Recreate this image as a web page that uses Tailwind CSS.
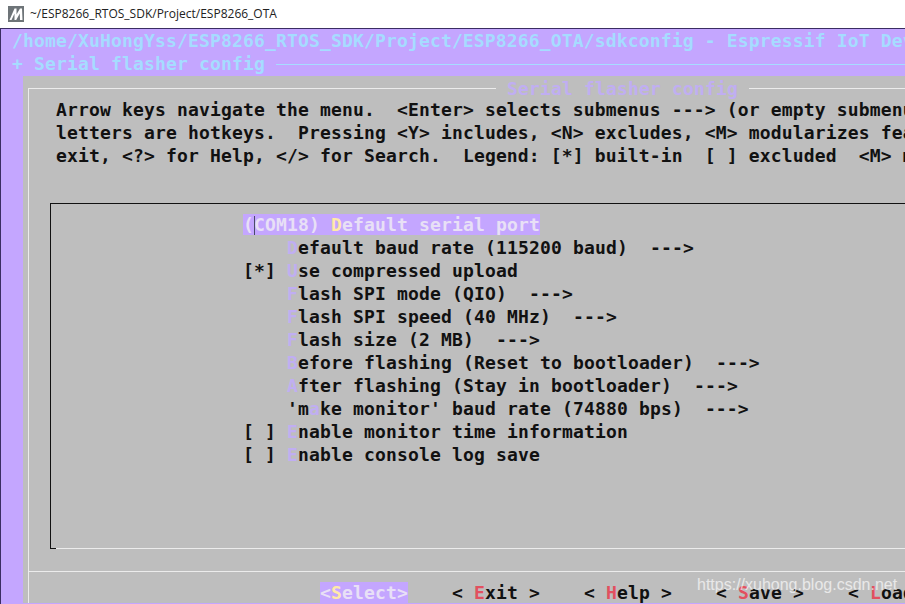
<!DOCTYPE html>
<html lang="en">
<head>
    <meta charset="UTF-8">
    <title>ESP8266_OTA</title>
    <script src="https://cdn.jsdelivr.net/npm/@tailwindcss/browser@4"></script>
</head>
<body class="w-[905px] h-[604px] overflow-hidden bg-white relative">
    <!-- Window title bar -->
    <div class="h-[28px] flex items-center pl-[8px] gap-[6px]">
        <svg width="16" height="16" viewBox="0 0 16 16">
            <rect width="16" height="16" fill="#6e7478"/>
            <path d="M1.5 14 L6.5 2.5 L8.5 2.5 L8.5 8.5 L12 2.5 L14 2.5 L14.5 14 L12 14 L11.8 7.5 L8.2 14 L6.5 14 L6.5 7.5 L3.5 14 Z" fill="#fff"/>
        </svg>
        <span class="text-[12px] text-[#222] font-['Open_Sans',sans-serif]">~/ESP8266_RTOS_SDK/Project/ESP8266_OTA</span>
    </div>

    <!-- Terminal -->
    <div class="h-[576px] border-t border-l border-[#3b2d63] bg-[#c4a6ff] overflow-hidden font-['DejaVu_Sans_Mono',monospace] font-bold text-[18px] tracking-[0.16px] leading-[23px]">
        <div class="h-[23px] pl-[11px] text-[#a6dcff] whitespace-pre">/home/XuHongYss/ESP8266_RTOS_SDK/Project/ESP8266_OTA/sdkconfig - Espressif IoT Development Framework</div>
        <div class="h-[23px] pl-[11px] text-[#a6dcff] flex items-center whitespace-pre">
            <span>+ Serial flasher config </span>
            <div class="flex-1 h-px bg-[#a6dcff] mt-[2px]"></div>
        </div>

        <!-- Dialog -->
        <div class="ml-[22px] mt-px h-[527px] bg-[#bebebe] pl-[5px] pt-[12px]">
            <div class="relative h-[515px] border-t border-l border-[#ececec]">
                <div class="absolute -top-[12px] left-[467px] px-[11px] text-[#c0aef2] bg-[#bebebe] whitespace-pre">Serial flasher config</div>

                <div class="pl-[27px] pt-[9px] text-[#111]">
                    <div class="h-[23px] whitespace-pre">Arrow keys navigate the menu.  &lt;Enter&gt; selects submenus ---&gt; (or empty submenus ----).</div>
                    <div class="h-[23px] whitespace-pre">letters are hotkeys.  Pressing &lt;Y&gt; includes, &lt;N&gt; excludes, &lt;M&gt; modularizes features.</div>
                    <div class="h-[23px] whitespace-pre">exit, &lt;?&gt; for Help, &lt;/&gt; for Search.  Legend: [*] built-in  [ ] excluded  &lt;M&gt; module</div>
                </div>

                <!-- Menu list -->
                <div class="relative ml-[21px] mt-[36px] h-[346px] border-t border-l border-b border-t-[#111] border-l-[#111] border-b-[#ececec] pl-[192px] pt-[9px] text-[#111]">
                    <div class="absolute -bottom-px -left-px w-[6px] h-px bg-[#111]"></div>
                    <div class="h-[23px] whitespace-pre"><span class="relative bg-[#c4a6ff] text-[#e8e0f6]">(<span class="absolute left-[11px] top-[2px] w-px h-[19px] bg-[#4a4a6a]"></span>COM18) <span class="text-[#ffe9a8]">D</span>efault serial port</span></div>
                    <div class="h-[23px] whitespace-pre">    <span class="text-[#c0aef2]">D</span>efault baud rate (115200 baud)  ---&gt;</div>
                    <div class="h-[23px] whitespace-pre">[*] <span class="text-[#c0aef2]">U</span>se compressed upload</div>
                    <div class="h-[23px] whitespace-pre">    <span class="text-[#c0aef2]">F</span>lash SPI mode (QIO)  ---&gt;</div>
                    <div class="h-[23px] whitespace-pre">    <span class="text-[#c0aef2]">F</span>lash SPI speed (40 MHz)  ---&gt;</div>
                    <div class="h-[23px] whitespace-pre">    <span class="text-[#c0aef2]">F</span>lash size (2 MB)  ---&gt;</div>
                    <div class="h-[23px] whitespace-pre">    <span class="text-[#c0aef2]">B</span>efore flashing (Reset to bootloader)  ---&gt;</div>
                    <div class="h-[23px] whitespace-pre">    <span class="text-[#c0aef2]">A</span>fter flashing (Stay in bootloader)  ---&gt;</div>
                    <div class="h-[23px] whitespace-pre">    'm<span class="text-[#c0aef2]">a</span>ke monitor' baud rate (74880 bps)  ---&gt;</div>
                    <div class="h-[23px] whitespace-pre">[ ] <span class="text-[#c0aef2]">E</span>nable monitor time information</div>
                    <div class="h-[23px] whitespace-pre">[ ] <span class="text-[#c0aef2]">E</span>nable console log save</div>
                </div>

                <!-- Buttons -->
                <div class="mt-[22px] border-t border-[#ececec] pt-[9px] pl-[291px] text-[#111] flex whitespace-pre">
                    <span class="w-[132px] shrink-0"><span class="bg-[#c4a6ff] text-[#e8e0f6]">&lt;<span class="text-[#ffe9a8]">S</span>elect&gt;</span></span>
                    <span class="w-[132px] shrink-0">&lt; <span class="text-[#e2505f]">E</span>xit &gt;</span>
                    <span class="w-[132px] shrink-0">&lt; <span class="text-[#e2505f]">H</span>elp &gt;</span>
                    <span class="w-[132px] shrink-0">&lt; <span class="text-[#e2505f]">S</span>ave &gt;</span>
                    <span class="w-[132px] shrink-0">&lt; <span class="text-[#e2505f]">L</span>oad &gt;</span>
                </div>
            </div>
        </div>
    </div>

    <!-- Watermark -->
    <div class="absolute left-[697px] top-[574px] text-[16px] leading-[22px] text-white/65 font-['Liberation_Sans',sans-serif]">https://xuhong.blog.csdn.net</div>
</body>
</html>
